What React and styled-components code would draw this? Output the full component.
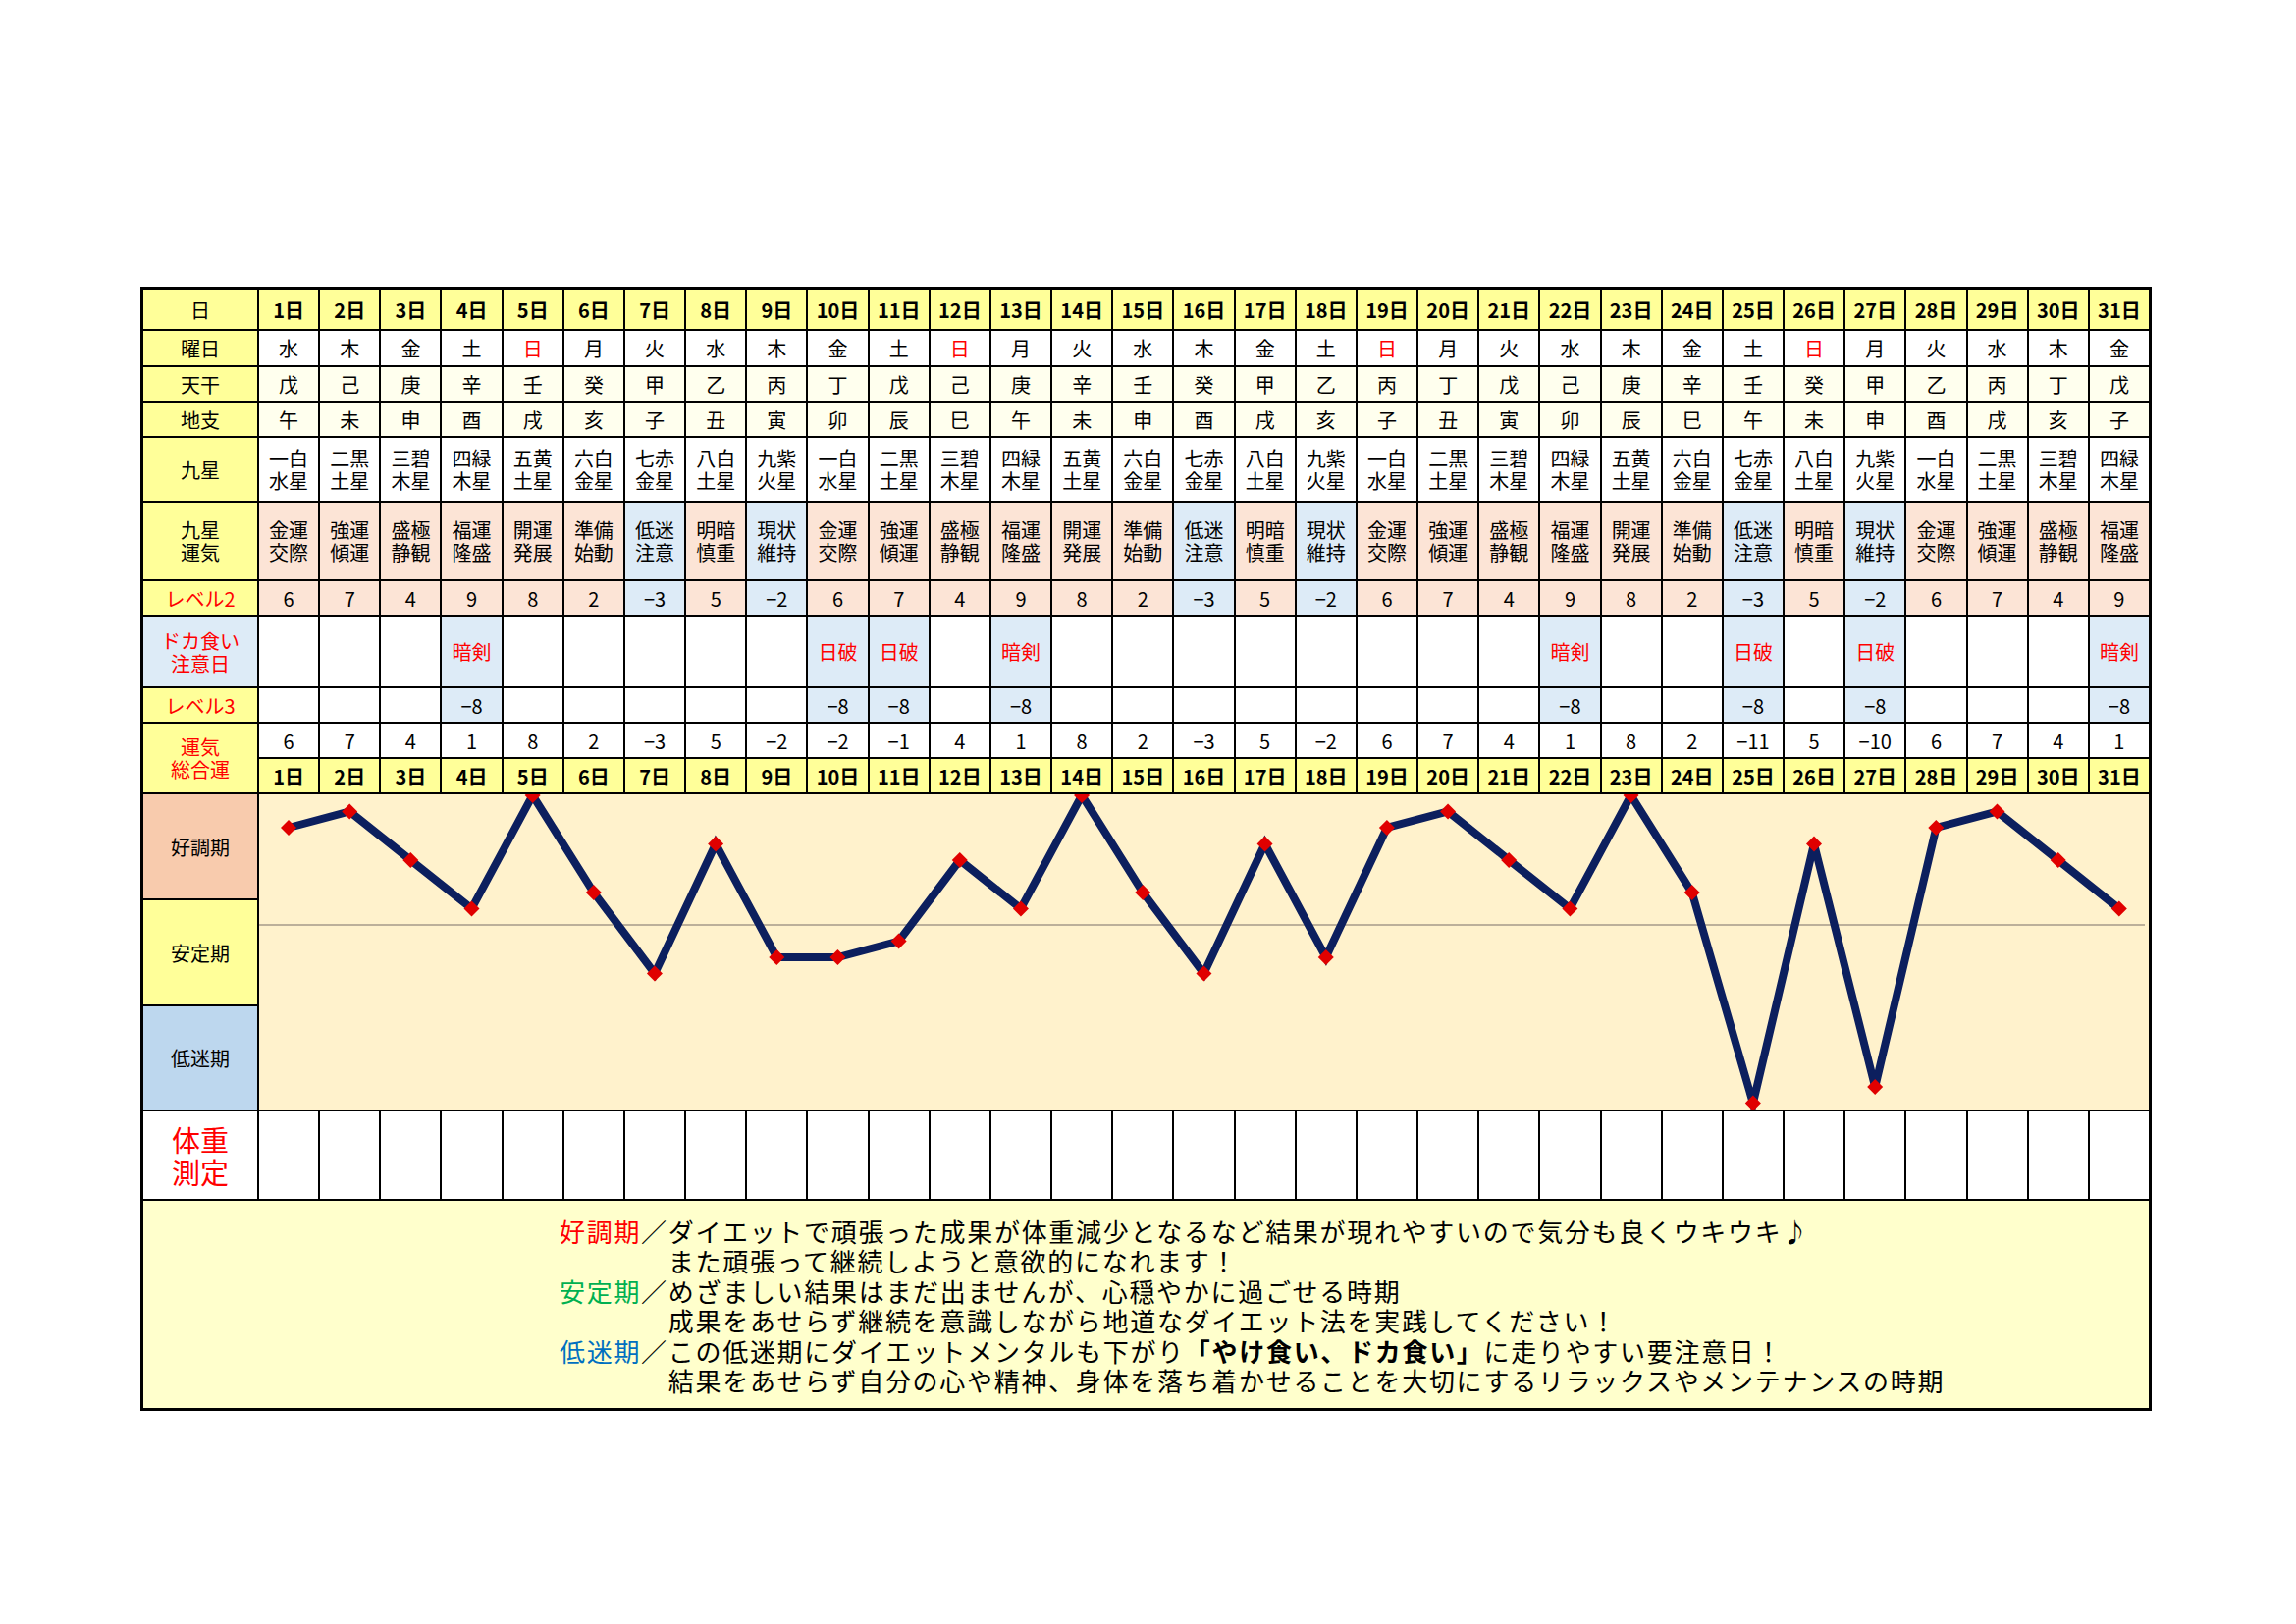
import React from 'react';
import styled, { createGlobalStyle } from 'styled-components';

const Global = createGlobalStyle`
  html, body { margin: 0; padding: 0; background: #fff; }
  body { font-family: "Noto Sans CJK JP", "Noto Sans", sans-serif; color: #000; }
`;

const Page = styled.div`
  width: 2339px;
  height: 1654px;
  box-sizing: border-box;
  padding: 292px 0 0 143px;
`;

const Sheet = styled.div`
  width: 2049px;
  box-sizing: border-box;
  display: grid;
  grid-template-columns: 116px repeat(31, 1fr);
  grid-template-rows: 40px 35px 34px 34px 64px 78px 34px 71px 34px 34px 34px 106px 106px 105px 89px 211px;
  gap: 2px;
  padding: 3px;
  background: #000;
`;

const Cell = styled.div`
  background: ${p => p.$bg || '#fff'};
  color: ${p => (p.$red ? '#ff0000' : '#000')};
  display: flex;
  align-items: center;
  justify-content: center;
  text-align: center;
  font-size: ${p => p.$size || 20}px;
  line-height: ${p => p.$lh || 23}px;
  font-weight: ${p => (p.$bold ? 700 : 400)};
  white-space: pre-line;
  grid-row: ${p => (p.$rows ? `span ${p.$rows}` : 'auto')};
`;

const Label = styled(Cell)`
  grid-column: 1;
`;

const Chart = styled.div`
  grid-column: 2 / span 31;
  grid-row: span 3;
  background: #fff2cc;
  overflow: hidden;
  svg { display: block; width: 100%; height: 100%; }
`;

const Notes = styled.div`
  grid-column: 1 / -1;
  background: #ffffcc;
  box-sizing: border-box;
  padding: 16px 0 0 424px;
  font-size: 26px;
  line-height: 30.4px;
  letter-spacing: 1.7px;
`;

const Entry = styled.div`
  display: grid;
  grid-template-columns: auto 1fr;
`;

const Term = styled.span`
  color: ${p => p.$color};
  white-space: nowrap;
`;

const Slash = styled.span`
  color: #000;
`;

const Line = styled.div`
  white-space: nowrap;
  height: 30.4px;
`;

const Strong = styled.b`
  font-weight: 700;
`;

const C = {
  yellow: '#ffff99',
  ivory: '#ffffee',
  salmon: '#fce4d6',
  blue: '#ddebf7',
  peach: '#f8cbad',
  lowBlue: '#bdd7ee',
};

const days = Array.from({ length: 31 }, (_, i) => i + 1);
const weekdays = ['水', '木', '金', '土', '日', '月', '火'];
const kan = ['甲', '乙', '丙', '丁', '戊', '己', '庚', '辛', '壬', '癸'];
const shi = ['子', '丑', '寅', '卯', '辰', '巳', '午', '未', '申', '酉', '戌', '亥'];
const stars = ['一白\n水星', '二黒\n土星', '三碧\n木星', '四緑\n木星', '五黄\n土星', '六白\n金星', '七赤\n金星', '八白\n土星', '九紫\n火星'];
const fortune = ['金運\n交際', '強運\n傾運', '盛極\n静観', '福運\n隆盛', '開運\n発展', '準備\n始動', '低迷\n注意', '明暗\n慎重', '現状\n維持'];
const level2 = [6, 7, 4, 9, 8, 2, -3, 5, -2];
const doka = { 4: '暗剣', 10: '日破', 11: '日破', 13: '暗剣', 22: '暗剣', 25: '日破', 27: '日破', 31: '暗剣' };

const fmt = n => (n < 0 ? `−${-n}` : `${n}`);

const rows = days.map(d => {
  const k = (d - 1) % 9;
  const l2 = level2[k];
  const l3 = doka[d] ? -8 : null;
  return {
    d,
    wd: weekdays[(d - 1) % 7],
    kan: kan[(4 + d - 1) % 10],
    shi: shi[(6 + d - 1) % 12],
    star: stars[k],
    fortune: fortune[k],
    l2,
    low: l2 < 0,
    doka: doka[d],
    l3,
    total: l2 + (l3 || 0),
  };
});

const W = 1925;
const H = 321;
const PITCH = (W + 2) / 31;
const px = d => (d - 1) * PITCH + 30;
const py = v => 133 - 16.5 * v;

function LineChart() {
  const pts = rows.map(r => `${px(r.d).toFixed(1)},${py(r.total).toFixed(1)}`).join(' ');
  return (
    <svg viewBox={`0 0 ${W} ${H}`} preserveAspectRatio="none">
      <line x1="0" y1={py(0)} x2={W - 4} y2={py(0)} stroke="#bcb09a" strokeWidth="2" />
      <polyline points={pts} fill="none" stroke="#0c1f5e" strokeWidth="8" strokeLinejoin="miter" />
      {rows.map(r => {
        const x = px(r.d);
        const y = py(r.total);
        return (
          <polygon
            key={r.d}
            points={`${x},${y - 8} ${x + 8},${y} ${x},${y + 8} ${x - 8},${y}`}
            fill="#e00000"
          />
        );
      })}
    </svg>
  );
}

export default function App() {
  return (
    <Page>
      <Global />
      <Sheet>
        <Label $bg={C.yellow}>日</Label>
        {rows.map(r => (
          <Cell key={`h${r.d}`} $bg={C.yellow} $bold>{r.d}日</Cell>
        ))}

        <Label $bg={C.yellow}>曜日</Label>
        {rows.map(r => (
          <Cell key={`w${r.d}`} $red={r.wd === '日'}>{r.wd}</Cell>
        ))}

        <Label $bg={C.yellow}>天干</Label>
        {rows.map(r => (
          <Cell key={`k${r.d}`} $bg={C.ivory}>{r.kan}</Cell>
        ))}

        <Label $bg={C.yellow}>地支</Label>
        {rows.map(r => (
          <Cell key={`s${r.d}`} $bg={C.ivory}>{r.shi}</Cell>
        ))}

        <Label $bg={C.yellow}>九星</Label>
        {rows.map(r => (
          <Cell key={`st${r.d}`}>{r.star}</Cell>
        ))}

        <Label $bg={C.yellow}>{'九星\n運気'}</Label>
        {rows.map(r => (
          <Cell key={`f${r.d}`} $bg={r.low ? C.blue : C.salmon}>{r.fortune}</Cell>
        ))}

        <Label $bg={C.yellow} $red>レベル2</Label>
        {rows.map(r => (
          <Cell key={`l2${r.d}`} $bg={r.low ? C.blue : C.salmon}>{fmt(r.l2)}</Cell>
        ))}

        <Label $bg={C.blue} $red>{'ドカ食い\n注意日'}</Label>
        {rows.map(r => (
          <Cell key={`dk${r.d}`} $bg={r.doka ? C.blue : '#fff'} $red>{r.doka || ''}</Cell>
        ))}

        <Label $bg={C.yellow} $red>レベル3</Label>
        {rows.map(r => (
          <Cell key={`l3${r.d}`} $bg={r.l3 ? C.blue : '#fff'}>{r.l3 ? fmt(r.l3) : ''}</Cell>
        ))}

        <Label $bg={C.yellow} $red $rows={2}>{'運気\n総合運'}</Label>
        {rows.map(r => (
          <Cell key={`t${r.d}`}>{fmt(r.total)}</Cell>
        ))}
        {rows.map(r => (
          <Cell key={`d${r.d}`} $bg={C.yellow} $bold>{r.d}日</Cell>
        ))}

        <Label $bg={C.peach}>好調期</Label>
        <Chart>
          <LineChart />
        </Chart>
        <Label $bg={C.yellow}>安定期</Label>
        <Label $bg={C.lowBlue}>低迷期</Label>

        <Label $red $size={29} $lh={33}>{'体重\n測定'}</Label>
        {rows.map(r => (
          <Cell key={`b${r.d}`} />
        ))}

        <Notes>
          <Entry>
            <span><Term $color="#ff0000">好調期</Term><Slash>／</Slash></span>
            <div>
              <Line>ダイエットで頑張った成果が体重減少となるなど結果が現れやすいので気分も良くウキウキ♪</Line>
              <Line>また頑張って継続しようと意欲的になれます！</Line>
            </div>
          </Entry>
          <Entry>
            <span><Term $color="#00b050">安定期</Term><Slash>／</Slash></span>
            <div>
              <Line>めざましい結果はまだ出ませんが、心穏やかに過ごせる時期</Line>
              <Line>成果をあせらず継続を意識しながら地道なダイエット法を実践してください！</Line>
            </div>
          </Entry>
          <Entry>
            <span><Term $color="#0070c0">低迷期</Term><Slash>／</Slash></span>
            <div>
              <Line>この低迷期にダイエットメンタルも下がり<Strong>「やけ食い、ドカ食い」</Strong>に走りやすい要注意日！</Line>
              <Line>結果をあせらず自分の心や精神、身体を落ち着かせることを大切にするリラックスやメンテナンスの時期</Line>
            </div>
          </Entry>
        </Notes>
      </Sheet>
    </Page>
  );
}
